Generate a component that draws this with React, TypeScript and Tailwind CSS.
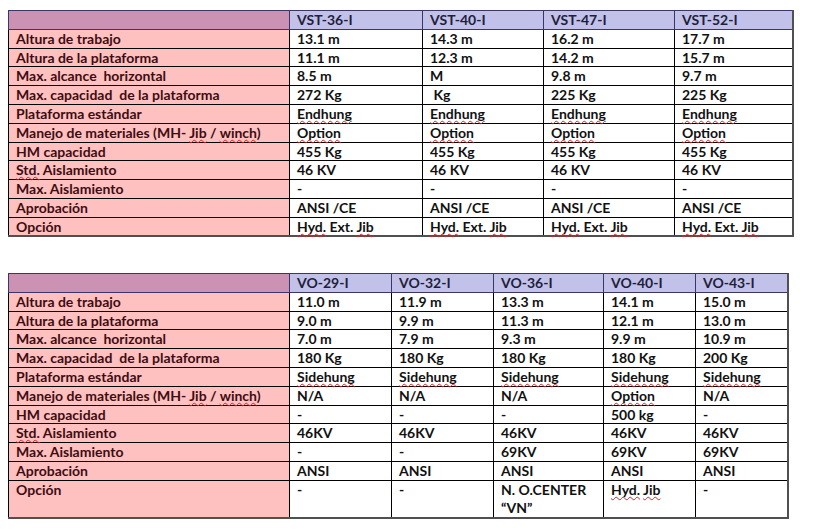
import React from 'react';

const wavy = "underline decoration-wavy decoration-[#e02020] decoration-1 underline-offset-[1px] [text-decoration-skip-ink:none]";

function renderText(text: string, marks: string[] = []) {
  if (!marks.length) return text;
  const re = new RegExp('(' + marks.map((m) => m.replace(/[.*+?^${}()|[\]\\]/g, '\\$&')).join('|') + ')');
  return text.split(re).map((p, i) =>
    marks.includes(p) ? (
      <span key={i} className={wavy}>{p}</span>
    ) : (
      <React.Fragment key={i}>{p}</React.Fragment>
    )
  );
}

type Row = { label: string; labelMarks?: string[]; values: string[]; marks?: string[] };

function SpecTable({
  models,
  widths,
  rows,
  lastTall,
}: {
  models: string[];
  widths: string[];
  rows: Row[];
  lastTall?: boolean;
}) {
  return (
    <table className="table-fixed border-collapse border-r-2 border-b-2 border-r-[#505050] border-b-[#505050]">
      <colgroup>
        <col className="w-[281px]" />
        {widths.map((w, i) => (
          <col key={i} className={w} />
        ))}
      </colgroup>
      <thead>
        <tr className="h-[18.8px]">
          <th className="bg-[#cc92b4] border border-[#3b3568] p-0" />
          {models.map((m) => (
            <th
              key={m}
              className="bg-[#c1c1ea] border border-[#3b3568] px-[7px] py-0 text-left font-bold text-[14px] leading-[17px] text-[#1f1f3a] align-top"
            >
              {m}
            </th>
          ))}
        </tr>
      </thead>
      <tbody>
        {rows.map((r, ri) => {
          const tall = lastTall && ri === rows.length - 1;
          return (
            <tr key={r.label} className={tall ? 'h-[37px]' : 'h-[18.8px]'}>
              <td className="bg-[#ffc0c0] border border-black px-[7px] py-0 text-[14px] leading-[17px] font-bold text-[#3d0d12] align-top whitespace-pre">
                {renderText(r.label, r.labelMarks)}
              </td>
              {r.values.map((v, vi) => (
                <td
                  key={vi}
                  className="bg-white border border-black px-[7px] py-0 text-[14px] leading-[17px] font-bold text-[#111] align-top whitespace-pre"
                >
                  {v.split('\n').map((line, li) => (
                    <div key={li} className={li > 0 ? 'leading-[19px]' : ''}>
                      {renderText(line, r.marks)}
                    </div>
                  ))}
                </td>
              ))}
            </tr>
          );
        })}
      </tbody>
    </table>
  );
}

export default function App() {
  const top: Row[] = [
    { label: 'Altura de trabajo', values: ['13.1 m', '14.3 m', '16.2 m', '17.7 m'] },
    { label: 'Altura de la plataforma', values: ['11.1 m', '12.3 m', '14.2 m', '15.7 m'] },
    { label: 'Max. alcance  horizontal', values: ['8.5 m', 'M', '9.8 m', '9.7 m'] },
    { label: 'Max. capacidad  de la plataforma', values: ['272 Kg', ' Kg', '225 Kg', '225 Kg'] },
    { label: 'Plataforma estándar', values: ['Endhung', 'Endhung', 'Endhung', 'Endhung'], marks: ['Endhung'] },
    { label: 'Manejo de materiales (MH- Jib / winch)', labelMarks: ['Jib', 'winch'], values: ['Option', 'Option', 'Option', 'Option'], marks: ['Option'] },
    { label: 'HM capacidad', values: ['455 Kg', '455 Kg', '455 Kg', '455 Kg'] },
    { label: 'Std. Aislamiento', labelMarks: ['Std.'], values: ['46 KV', '46 KV', '46 KV', '46 KV'] },
    { label: 'Max. Aislamiento', values: ['-', '-', '-', '-'] },
    { label: 'Aprobación', values: ['ANSI /CE', 'ANSI /CE', 'ANSI /CE', 'ANSI /CE'] },
    { label: 'Opción', values: ['Hyd. Ext. Jib', 'Hyd. Ext. Jib', 'Hyd. Ext. Jib', 'Hyd. Ext. Jib'], marks: ['Hyd.', 'Jib'] },
  ];

  const bottom: Row[] = [
    { label: 'Altura de trabajo', values: ['11.0 m', '11.9 m', '13.3 m', '14.1 m', '15.0 m'] },
    { label: 'Altura de la plataforma', values: ['9.0 m', '9.9 m', '11.3 m', '12.1 m', '13.0 m'] },
    { label: 'Max. alcance  horizontal', values: ['7.0 m', '7.9 m', '9.3 m', '9.9 m', '10.9 m'] },
    { label: 'Max. capacidad  de la plataforma', values: ['180 Kg', '180 Kg', '180 Kg', '180 Kg', '200 Kg'] },
    { label: 'Plataforma estándar', values: ['Sidehung', 'Sidehung', 'Sidehung', 'Sidehung', 'Sidehung'], marks: ['Sidehung'] },
    { label: 'Manejo de materiales (MH- Jib / winch)', labelMarks: ['Jib', 'winch'], values: ['N/A', 'N/A', 'N/A', 'Option', 'N/A'], marks: ['Option'] },
    { label: 'HM capacidad', values: ['-', '-', '-', '500 kg', '-'] },
    { label: 'Std. Aislamiento', labelMarks: ['Std.'], values: ['46KV', '46KV', '46KV', '46KV', '46KV'] },
    { label: 'Max. Aislamiento', values: ['-', '-', '69KV', '69KV', '69KV'] },
    { label: 'Aprobación', values: ['ANSI', 'ANSI', 'ANSI', 'ANSI', 'ANSI'] },
    { label: 'Opción', values: ['-', '-', 'N. O.CENTER\n\u201cVN\u201d', 'Hyd. Jib', '-'], marks: ['Hyd.', 'Jib'] },
  ];

  return (
    <div className="w-[824px] h-[529px] bg-white pl-[8px] pt-[10px] font-['Lato','Liberation_Sans',sans-serif] overflow-hidden">
      <SpecTable
        models={['VST-36-I', 'VST-40-I', 'VST-47-I', 'VST-52-I']}
        widths={['w-[133px]', 'w-[121px]', 'w-[131px]', 'w-[118px]']}
        rows={top}
      />
      <div className="h-[36px]" />
      <SpecTable
        models={['VO-29-I', 'VO-32-I', 'VO-36-I', 'VO-40-I', 'VO-43-I']}
        widths={['w-[102px]', 'w-[102px]', 'w-[110px]', 'w-[92px]', 'w-[92px]']}
        rows={bottom}
        lastTall
      />
    </div>
  );
}
